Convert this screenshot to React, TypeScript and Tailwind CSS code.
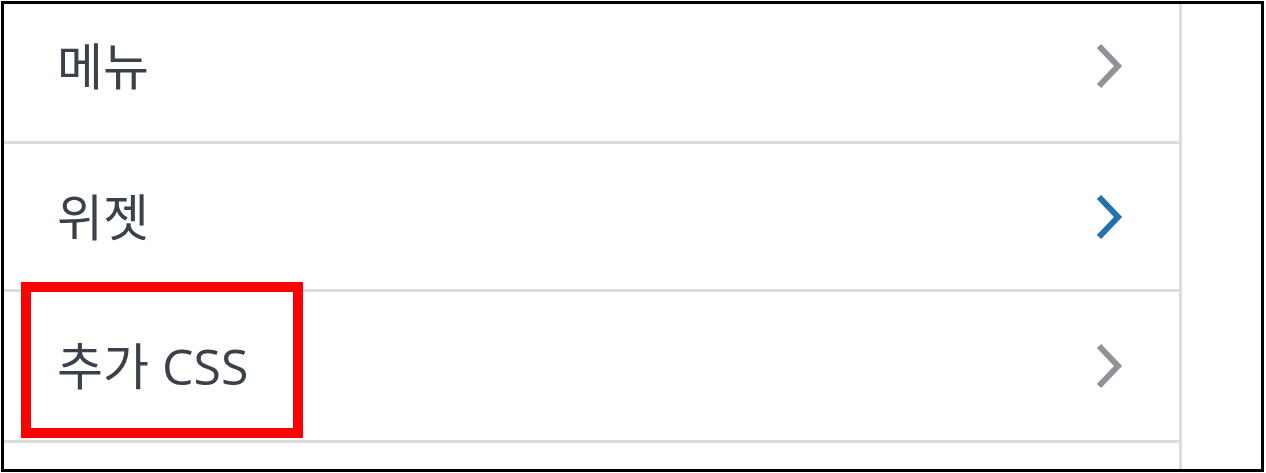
import React from "react";

function Chevron({ color }: { color: string }) {
  return (
    <svg width="30" height="50" viewBox="0 0 30 50" fill="none" className="shrink-0">
      <path d="M6 5 L25 25 L6 45" stroke={color} strokeWidth="6" strokeLinecap="butt" strokeLinejoin="miter" />
    </svg>
  );
}

function Row({ label, color, className }: { label: string; color: string; className: string }) {
  return (
    <div className={`flex items-center justify-between border-b-[3px] border-[#dcdcde] pl-[53px] pr-[56px] ${className}`}>
      <span
        className="text-[50px] font-normal leading-none text-[#3a4148]"
        style={{ fontFamily: '"Open Sans", "Noto Sans CJK KR", sans-serif' }}
      >
        {label}
      </span>
      <Chevron color={color} />
    </div>
  );
}

export default function App() {
  return (
    <div className="w-[1266px] h-[473px] bg-white p-[1px]">
      <div className="relative flex h-[471px] w-[1263px] overflow-hidden border-[3px] border-black bg-white">
        <div className="flex w-[1178px] flex-col border-r-[3px] border-[#dcdcde]">
          <Row label="메뉴" color="#8f9297" className="h-[140px] pb-[13px]" />
          <Row label="위젯" color="#2271b1" className="h-[148px]" />
          <Row label="추가 CSS" color="#8f9297" className="h-[151px]" />
        </div>
        <div className="flex-1" />
        <div className="absolute left-[17px] top-[278px] h-[156px] w-[282px] border-[10px] border-[#ff0000]" />
      </div>
    </div>
  );
}
